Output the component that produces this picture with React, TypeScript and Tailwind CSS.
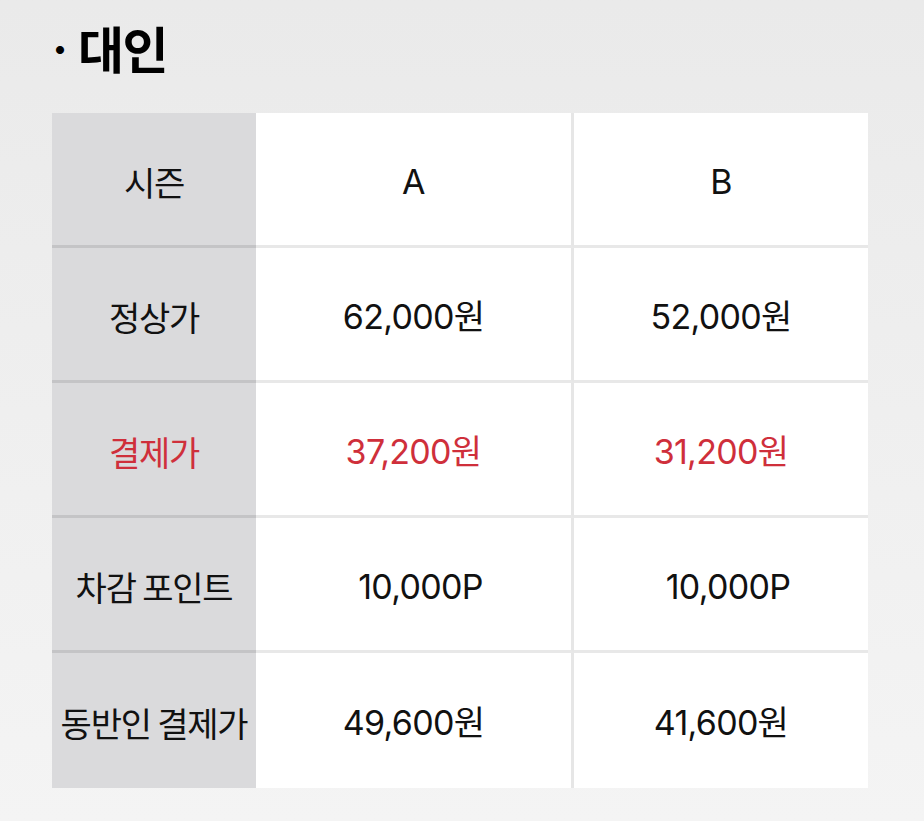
import React from "react";

const rows = [
  { label: "시즌", a: "A", b: "B", red: false },
  { label: "정상가", a: "62,000원", b: "52,000원", red: false },
  { label: "결제가", a: "37,200원", b: "31,200원", red: true },
  { label: "차감 포인트", a: "10,000P", b: "10,000P", red: false, shift: true },
  { label: "동반인 결제가", a: "49,600원", b: "41,600원", red: false },
];

export default function App() {
  return (
    <div
      className="w-[924px] h-[821px] bg-gradient-to-b from-[#eaeaea] via-[#efefef] to-[#f4f4f4] pl-[52px] pt-[8px]"
      style={{ fontFamily: "Inter, 'Noto Sans CJK KR', sans-serif" }}
    >
      <div className="flex items-center h-[78px] text-black">
        <span className="text-[48px] font-bold leading-none mr-[10px] pt-[6px]">·</span>
        <span
          className="text-[50px] font-bold leading-none tracking-[-1.5px]"
          style={{ fontFamily: "'Noto Sans CJK KR', sans-serif" }}
        >
          대인
        </span>
      </div>
      <div className="mt-[27px] w-[816px] flex flex-col">
        {rows.map((r, i) => {
          const last = i === rows.length - 1;
          const textColor = r.red ? "text-[#cf2f3b]" : "text-[#111111]";
          return (
            <div key={i} className="flex">
              <div
                className={`w-[204px] flex items-center justify-center bg-[#dadadc] text-[34px] tracking-[-1.2px] ${textColor} ${
                  last ? "h-[135px]" : "h-[135px] border-b-[3px] border-[#c4c4c6]"
                }`}
                style={{ fontFamily: "'Noto Sans CJK KR', sans-serif" }}
              >
                <span className="pt-[4px] whitespace-nowrap">{r.label}</span>
              </div>
              <div
                className={`w-[318px] flex items-center justify-center bg-white border-r-[3px] border-[#e6e6e6] text-[34px] tracking-[-0.7px] ${textColor} ${
                  last ? "h-[135px]" : "h-[135px] border-b-[3px] border-b-[#e8e8e8]"
                }`}
              >
                <span className={r.shift ? "pl-[14px] pt-[4px]" : "pt-[4px]"}>{r.a}</span>
              </div>
              <div
                className={`w-[294px] flex items-center justify-center bg-white text-[34px] tracking-[-0.7px] ${textColor} ${
                  last ? "h-[135px]" : "h-[135px] border-b-[3px] border-b-[#e8e8e8]"
                }`}
              >
                <span className={r.shift ? "pl-[14px] pt-[4px]" : "pt-[4px]"}>{r.b}</span>
              </div>
            </div>
          );
        })}
      </div>
    </div>
  );
}
